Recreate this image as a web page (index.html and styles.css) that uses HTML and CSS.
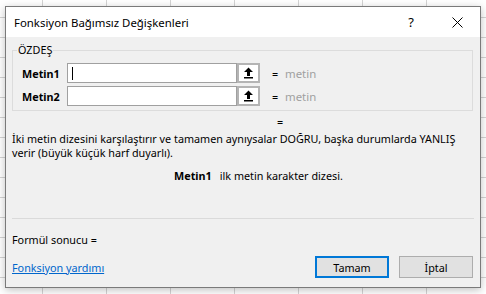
FILE: index.html
```html
<!DOCTYPE html>
<html lang="tr">
<head>
<meta charset="utf-8">
<title>Fonksiyon Bağımsız Değişkenleri</title>
<link rel="stylesheet" href="styles.css">
</head>
<body>
<div class="dialog">
  <div class="titlebar">
    <span class="title">Fonksiyon Bağımsız Değişkenleri</span>
    <div class="tb-buttons">
      <span class="tb-btn help">?</span>
      <span class="tb-btn close">
        <svg width="11" height="11" viewBox="0 0 11 11"><path d="M0.5 0.5 L10.5 10.5 M10.5 0.5 L0.5 10.5" stroke="#000" stroke-width="1" fill="none"/></svg>
      </span>
    </div>
  </div>
  <div class="content">
    <fieldset class="group">
      <legend class="legend">ÖZDEŞ</legend>
      <div class="arg-row">
        <span class="arg-label">Metin1</span>
        <span class="field"><span class="caret"></span></span>
        <span class="ref-btn">
          <svg width="11" height="12" viewBox="0 0 11 12"><path d="M5.5 0.5 L10 5 L7 5 L7 9 L4 9 L4 5 L1 5 Z" fill="#000"/><rect x="1" y="10" width="9" height="1.5" fill="#000"/></svg>
        </span>
        <span class="eq">=</span>
        <span class="val">metin</span>
      </div>
      <div class="arg-row">
        <span class="arg-label">Metin2</span>
        <span class="field"></span>
        <span class="ref-btn">
          <svg width="11" height="12" viewBox="0 0 11 12"><path d="M5.5 0.5 L10 5 L7 5 L7 9 L4 9 L4 5 L1 5 Z" fill="#000"/><rect x="1" y="10" width="9" height="1.5" fill="#000"/></svg>
        </span>
        <span class="eq">=</span>
        <span class="val">metin</span>
      </div>
    </fieldset>
    <div class="result-eq">=</div>
    <p class="desc">İki metin dizesini karşılaştırır ve tamamen aynıysalar DOĞRU, başka durumlarda YANLIŞ verir (büyük küçük harf duyarlı).</p>
    <p class="arg-desc"><b>Metin1</b><span class="arg-desc-text">ilk metin karakter dizesi.</span></p>
    <div class="separator"></div>
    <div class="formula">Formül sonucu =</div>
    <div class="footer">
      <a class="help-link" href="#">Fonksiyon yardımı</a>
      <div class="buttons">
        <span class="btn primary">Tamam</span>
        <span class="btn">İptal</span>
      </div>
    </div>
  </div>
</div>
</body>
</html>
```

FILE: styles.css
```css
html, body {
  margin: 0;
  padding: 0;
}
body {
  width: 486px;
  height: 294px;
  overflow: hidden;
  padding-top: 6px;
  box-sizing: border-box;
  background-color: #ffffff;
  background-image:
    linear-gradient(to right, #d4d4d4 1px, transparent 1px),
    linear-gradient(to bottom, #d4d4d4 1px, transparent 1px);
  background-size: 64px 20px;
  background-position: 42px 17px;
  font-family: "Noto Sans", "Liberation Sans", sans-serif;
  font-size: 10.8px;
  color: #000;
}
.dialog {
  margin-left: 5px;
  width: 476px;
  height: 282px;
  box-sizing: border-box;
  border: 1px solid #7a7a7a;
  background: #f0f0f0;
  box-shadow: 0 2px 8px rgba(0,0,0,0.25);
  display: flex;
  flex-direction: column;
}
.titlebar {
  height: 30px;
  background: #fff;
  display: flex;
  align-items: center;
  justify-content: space-between;
  padding-left: 8px;
}
.title {
  font-size: 11.4px;
}
.tb-buttons {
  display: flex;
  height: 100%;
}
.tb-btn {
  width: 46px;
  height: 100%;
  display: flex;
  align-items: center;
  justify-content: center;
}
.help {
  font-size: 13px;
}
.content {
  padding: 0 7px 0 6px;
  display: flex;
  flex-direction: column;
  flex: 1;
}
.group {
  margin: 6px 0 0 0;
  padding: 0 0 4px 0;
  border: 1px solid #dcdcdc;
  min-width: 0;
}
.legend {
  margin-left: 4px;
  padding: 0 1px;
  line-height: 14px;
}
.arg-row {
  display: flex;
  align-items: center;
  height: 20px;
  margin-top: 3px;
  padding-left: 9px;
}
.arg-row:first-of-type {
  margin-top: 6px;
}
.arg-label {
  width: 45px;
  font-weight: bold;
}
.field {
  width: 170px;
  height: 20px;
  box-sizing: border-box;
  border: 1px solid #a0a0a0;
  background: #fff;
  display: flex;
  align-items: center;
  padding-left: 4px;
}
.caret {
  width: 1px;
  height: 13px;
  background: #000;
}
.ref-btn {
  width: 23px;
  height: 20px;
  box-sizing: border-box;
  border: 2px solid #b4b4b4;
  background: #fff;
  display: flex;
  align-items: center;
  justify-content: center;
}
.eq {
  margin-left: 12px;
  width: 13px;
}
.val {
  color: #a0a0a0;
  font-size: 11.4px;
}
.result-eq {
  margin-top: 4px;
  line-height: 14px;
  padding-left: 265px;
}
.desc {
  margin: 3px 0 0 0;
  line-height: 14px;
}
.arg-desc {
  margin: 9px 0 0 0;
  line-height: 14px;
  padding-left: 162px;
}
.arg-desc-text {
  margin-left: 8px;
}
.separator {
  margin-top: 35px;
  height: 1px;
  background: #dadada;
  margin-right: -1px;
}
.formula {
  margin-top: 14px;
  line-height: 14px;
}
.footer {
  margin-top: 9px;
  display: flex;
  align-items: center;
  justify-content: space-between;
}
.help-link {
  color: #0066cc;
  text-decoration: underline;
}
.buttons {
  display: flex;
  gap: 10px;
}
.btn {
  width: 74px;
  height: 22px;
  box-sizing: border-box;
  border: 1px solid #adadad;
  background: #e1e1e1;
  display: flex;
  align-items: center;
  justify-content: center;
}
.btn.primary {
  border: 2px solid #0078d7;
}
```
